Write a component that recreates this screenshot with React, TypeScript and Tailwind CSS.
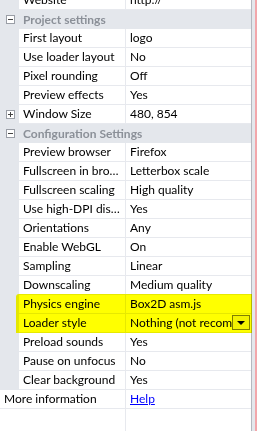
import React from "react";

const font = { fontFamily: 'Lato, "Noto Sans", sans-serif' };

function Box({ plus }: { plus?: boolean }) {
  return (
    <div className="relative w-[9px] h-[9px] border border-[#9a9ea6] bg-white">
      <div className="absolute left-[1px] top-[3px] w-[5px] h-[1px] bg-[#444]" />
      {plus && <div className="absolute left-[3px] top-[1px] w-[1px] h-[5px] bg-[#444]" />}
    </div>
  );
}

function Row({ label, value, plus, gutter = true, link }: { label: string; value: string; plus?: boolean; gutter?: boolean; link?: boolean }) {
  return (
    <div className="flex h-[19px] shrink-0">
      {gutter && (
        <div className="w-[19px] h-full bg-[#e4e7ec] flex items-center justify-center pl-[1px]">
          {plus && <Box plus />}
        </div>
      )}
      <div
        className={`h-full flex items-center border-b border-r border-[#e7e9ee] overflow-hidden whitespace-nowrap ${gutter ? "w-[107px] pl-[4px]" : "w-[126px] pl-[4px]"}`}
      >
        <span className="truncate block min-w-0 pr-[2px]">{label}</span>
      </div>
      <div className="flex-1 min-w-0 h-full flex items-center border-b border-[#e7e9ee] pl-[4px] overflow-hidden whitespace-nowrap">
        {link ? <span className="text-[#0000ff] underline">{value}</span> : value}
      </div>
    </div>
  );
}

function Header({ label }: { label: string }) {
  return (
    <div className="flex h-[19px] shrink-0 bg-[#e4e7ec] items-center">
      <div className="w-[19px] flex items-center justify-center pl-[1px]">
        <Box />
      </div>
      <div className="pl-[4px] font-bold text-[#8b9098] whitespace-nowrap">{label}</div>
    </div>
  );
}

export default function App() {
  return (
    <div className="w-[257px] h-[431px] bg-white overflow-hidden flex text-[12px] text-black relative" style={font}>
      <div className="w-[251px] flex flex-col -mt-[9px] relative">
        <Row label="Website" value="http://" />
        <Header label="Project settings" />
        <Row label="First layout" value="logo" />
        <Row label="Use loader layout" value="No" />
        <Row label="Pixel rounding" value="Off" />
        <Row label="Preview effects" value="Yes" />
        <Row label="Window Size" value="480, 854" plus />
        <Header label="Configuration Settings" />
        <Row label="Preview browser" value="Firefox" />
        <Row label="Fullscreen in browser" value="Letterbox scale" />
        <Row label="Fullscreen scaling" value="High quality" />
        <Row label="Use high-DPI display" value="Yes" />
        <Row label="Orientations" value="Any" />
        <Row label="Enable WebGL" value="On" />
        <Row label="Sampling" value="Linear" />
        <Row label="Downscaling" value="Medium quality" />
        <Row label="Physics engine" value="Box2D asm.js" />
        <div className="flex h-[19px] shrink-0">
          <div className="w-[19px] h-full bg-[#e4e7ec]" />
          <div className="w-[107px] h-full flex items-center border-b border-r border-[#e7e9ee] pl-[4px] whitespace-nowrap overflow-hidden">
            Loader style
          </div>
          <div className="flex-1 min-w-0 h-full flex items-center border-b border-[#e7e9ee] pl-[4px] overflow-hidden whitespace-nowrap relative">
            <span className="overflow-hidden w-[102px] block">Nothing (not recommended)</span>
            <div className="absolute right-[1px] top-[1px] w-[18px] h-[15px] border border-[#7f7f7f] bg-[#f3f3f3] flex items-center justify-center">
              <div className="w-0 h-0 border-l-[4px] border-r-[4px] border-t-[4px] border-l-transparent border-r-transparent border-t-black" />
            </div>
          </div>
        </div>
        <Row label="Preload sounds" value="Yes" />
        <Row label="Pause on unfocus" value="No" />
        <Row label="Clear background" value="Yes" />
        <Row label="More information" value="Help" gutter={false} link />
        <div className="flex flex-1">
          <div className="w-[126px] border-r border-[#e7e9ee]" />
          <div className="flex-1" />
        </div>
      </div>
      <div className="w-[1px] bg-[#b4b8bf]" />
      <div className="w-[3px] bg-[#e4e7ec]" />
      <div className="w-[2px] bg-[#f2a7ab]" />
      <div className="absolute left-[16px] top-[294px] w-[236px] h-[39px] bg-[#ffff00] mix-blend-multiply rounded-tl-[3px]" />
    </div>
  );
}
